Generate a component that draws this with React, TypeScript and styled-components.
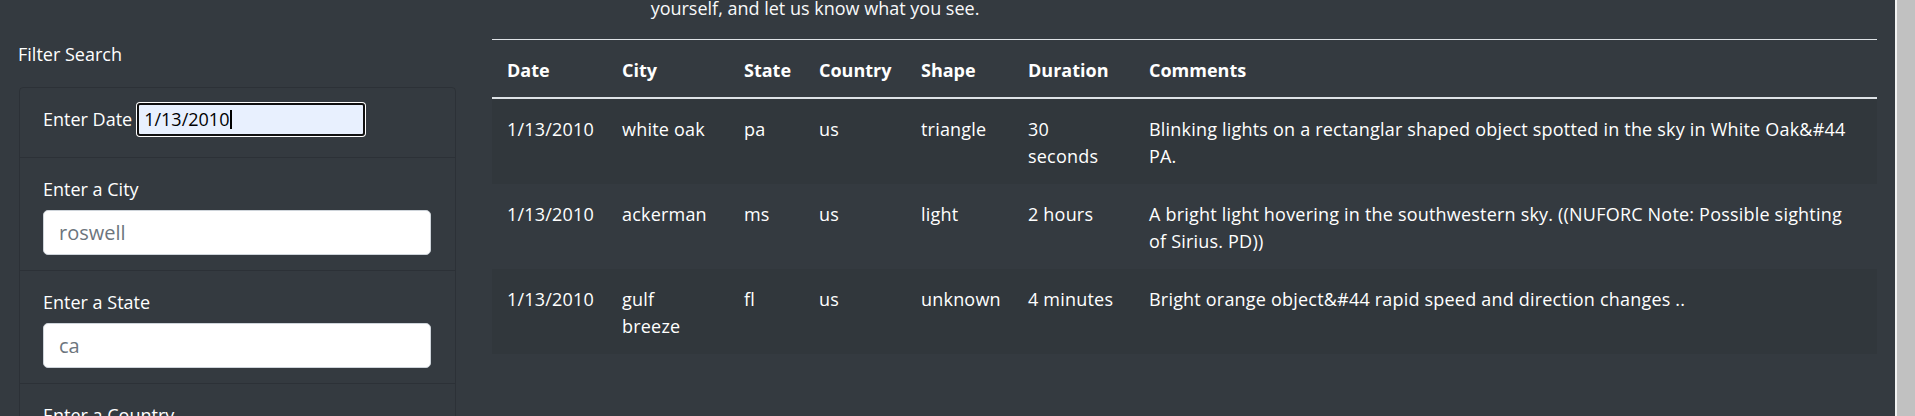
import React from "react";
import styled, { createGlobalStyle } from "styled-components";

const GlobalStyle = createGlobalStyle`
  html, body {
    margin: 0;
    padding: 0;
    background: #343a40;
    overflow: hidden;
  }
  body {
    font-family: "Open Sans", "Noto Sans", sans-serif;
    font-size: 18px;
    line-height: 27px;
    color: #ffffff;
  }
  * { box-sizing: border-box; }
`;

const Page = styled.div`
  display: flex;
  width: 1915px;
  height: 416px;
  overflow: hidden;
`;

const Main = styled.div`
  flex: 1;
  display: flex;
  align-items: flex-start;
`;

const ScrollTrack = styled.div`
  width: 20px;
  height: 416px;
  background: #f1f1f1;
  display: flex;
  padding-left: 2px;
`;

const ScrollThumb = styled.div`
  flex: 1;
  background: #c1c1c1;
`;

const Sidebar = styled.aside`
  width: 456px;
  padding: 41px 0 0 18px;
  display: flex;
  flex-direction: column;
`;

const SidebarTitle = styled.div`
  font-size: 18px;
  line-height: 27px;
  margin-bottom: 19px;
`;

const FilterCard = styled.ul`
  list-style: none;
  margin: 0 0 0 1px;
  padding: 0;
  border: 1px solid rgba(0, 0, 0, 0.14);
  border-radius: 4px;
`;

const FilterItem = styled.li<{ $inline?: boolean }>`
  display: flex;
  flex-direction: ${(p) => (p.$inline ? "row" : "column")};
  align-items: ${(p) => (p.$inline ? "center" : "stretch")};
  gap: ${(p) => (p.$inline ? "5px" : "7px")};
  padding: ${(p) => (p.$inline ? "15px 24px 21px 23px" : "18px 24px 15px 23px")};
  & + & {
    border-top: 1px solid rgba(0, 0, 0, 0.14);
  }
`;

const FieldLabel = styled.label`
  font-size: 18px;
  line-height: 27px;
  color: #ffffff;
`;

const DateBox = styled.div`
  width: 228px;
  height: 33px;
  border: 2px solid #101010;
  border-radius: 3px;
  box-shadow: 0 0 0 1px #ffffff;
  background: #e8f0fe;
  display: flex;
  align-items: center;
  padding-left: 5px;
  color: #000000;
  font-size: 18px;
`;

const Caret = styled.span`
  display: inline-block;
  width: 2px;
  height: 19px;
  background: #000000;
  margin-left: 1px;
`;

const TextInput = styled.input`
  width: 388px;
  height: 45px;
  border: 1px solid #ced4da;
  border-radius: 5px;
  background: #ffffff;
  padding: 0 15px;
  font-family: "Open Sans", "Noto Sans", sans-serif;
  font-size: 20px;
  color: #495057;
  outline: none;
  &::placeholder {
    color: #6c757d;
  }
`;

const Content = styled.section`
  width: 1385px;
  margin-left: 36px;
  display: flex;
  flex-direction: column;
`;

const Intro = styled.p`
  width: 646px;
  margin: -5px 0 17px;
  text-align: center;
  font-size: 18px;
  line-height: 27px;
  color: #f8f9fa;
`;

const Table = styled.table`
  width: 1385px;
  table-layout: fixed;
  border-collapse: separate;
  border-spacing: 0;
  color: #ffffff;
`;

const HeadCell = styled.th`
  text-align: left;
  font-weight: 700;
  padding: 17px 15px 13px;
  line-height: 27px;
  vertical-align: bottom;
  border-top: 1px solid #dee2e6;
  border-bottom: 2px solid #dee2e6;
`;

const BodyRow = styled.tr<{ $striped: boolean }>`
  background: ${(p) => (p.$striped ? "rgba(0, 0, 0, 0.05)" : "transparent")};
  & + & td {
    border-top: 1px solid #dee2e6;
  }
`;

const Cell = styled.td`
  padding: 17px 15px 14px;
  line-height: 27px;
  vertical-align: top;
  font-weight: 400;
  letter-spacing: 0.2px;
  &:last-child {
    padding-right: 23px;
  }
`;

type Sighting = {
  date: string;
  city: string;
  state: string;
  country: string;
  shape: string;
  duration: string;
  comments: string;
};

const columns: { key: keyof Sighting; label: string; width: number }[] = [
  { key: "date", label: "Date", width: 115 },
  { key: "city", label: "City", width: 122 },
  { key: "state", label: "State", width: 75 },
  { key: "country", label: "Country", width: 102 },
  { key: "shape", label: "Shape", width: 107 },
  { key: "duration", label: "Duration", width: 121 },
  { key: "comments", label: "Comments", width: 743 },
];

const sightings: Sighting[] = [
  {
    date: "1/13/2010",
    city: "white oak",
    state: "pa",
    country: "us",
    shape: "triangle",
    duration: "30 seconds",
    comments:
      "Blinking lights on a rectanglar shaped object spotted in the sky in White Oak&#44 PA.",
  },
  {
    date: "1/13/2010",
    city: "ackerman",
    state: "ms",
    country: "us",
    shape: "light",
    duration: "2 hours",
    comments:
      "A bright light hovering in the southwestern sky. ((NUFORC Note: Possible sighting of Sirius. PD))",
  },
  {
    date: "1/13/2010",
    city: "gulf breeze",
    state: "fl",
    country: "us",
    shape: "unknown",
    duration: "4 minutes",
    comments: "Bright orange object&#44 rapid speed and direction changes ..",
  },
];

export default function App() {
  return (
    <>
      <GlobalStyle />
      <Page>
        <Main>
          <Sidebar>
            <SidebarTitle>Filter Search</SidebarTitle>
            <FilterCard>
              <FilterItem $inline>
                <FieldLabel>Enter Date</FieldLabel>
                <DateBox>
                  <span>1/13/2010</span>
                  <Caret />
                </DateBox>
              </FilterItem>
              <FilterItem>
                <FieldLabel htmlFor="city">Enter a City</FieldLabel>
                <TextInput id="city" placeholder="roswell" />
              </FilterItem>
              <FilterItem>
                <FieldLabel htmlFor="state">Enter a State</FieldLabel>
                <TextInput id="state" placeholder="ca" />
              </FilterItem>
              <FilterItem>
                <FieldLabel htmlFor="country">Enter a Country</FieldLabel>
                <TextInput id="country" placeholder="us" />
              </FilterItem>
            </FilterCard>
          </Sidebar>
          <Content>
            <Intro>yourself, and let us know what you see.</Intro>
            <Table>
              <colgroup>
                {columns.map((c) => (
                  <col key={c.key} style={{ width: c.width }} />
                ))}
              </colgroup>
              <thead>
                <tr>
                  {columns.map((c) => (
                    <HeadCell key={c.key}>{c.label}</HeadCell>
                  ))}
                </tr>
              </thead>
              <tbody>
                {sightings.map((s, i) => (
                  <BodyRow key={i} $striped={i % 2 === 0}>
                    {columns.map((c) => (
                      <Cell key={c.key}>{s[c.key]}</Cell>
                    ))}
                  </BodyRow>
                ))}
              </tbody>
            </Table>
          </Content>
        </Main>
        <ScrollTrack>
          <ScrollThumb />
        </ScrollTrack>
      </Page>
    </>
  );
}
